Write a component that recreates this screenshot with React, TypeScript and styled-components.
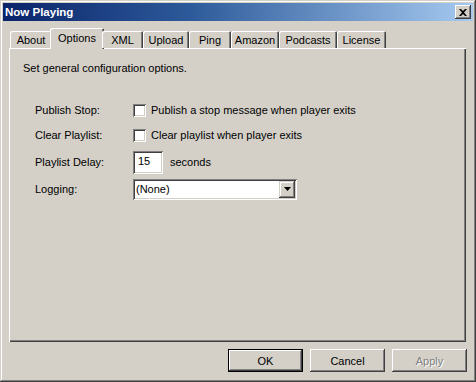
import React from "react";
import styled, { createGlobalStyle } from "styled-components";

const Global = createGlobalStyle`
  html, body { margin: 0; padding: 0; background: #d4d0c8; }
  body { font-family: "Liberation Sans", Arial, sans-serif; font-size: 11px; color: #000; }
  * { box-sizing: border-box; }
`;

const Window = styled.div`
  width: 476px;
  height: 382px;
  background: #d4d0c8;
  padding: 3px;
  display: flex;
  flex-direction: column;
  box-shadow: inset -1px -1px #404040, inset 1px 1px #d4d0c8,
    inset -2px -2px #808080, inset 2px 2px #ffffff;
`;

const TitleBar = styled.div`
  height: 18px;
  display: flex;
  align-items: center;
  justify-content: space-between;
  padding: 0 2px 0 2px;
  background: linear-gradient(to right, #0a246a 0%, #2d5a9a 40%, #a6caf0 100%);
`;

const Title = styled.span`
  color: #fff;
  font-weight: bold;
  font-size: 11.5px;
`;

const CloseButton = styled.div`
  width: 16px;
  height: 14px;
  background: #d4d0c8;
  display: flex;
  align-items: center;
  justify-content: center;
  box-shadow: inset -1px -1px #404040, inset 1px 1px #ffffff,
    inset -2px -2px #808080, inset 2px 2px #d4d0c8;
`;

const Body = styled.div`
  flex: 1;
  display: flex;
  flex-direction: column;
  padding: 7px 7px 0 6px;
`;

const TabStrip = styled.div`
  display: flex;
  align-items: flex-end;
  height: 20px;
  padding-left: 1px;
  position: relative;
  z-index: 1;
`;

const Tab = styled.div<{ $w: number; $active?: boolean }>`
  width: ${(p) => (p.$active ? p.$w + 4 : p.$w)}px;
  margin: ${(p) => (p.$active ? "0 -2px -1px -2px" : "0")};
  height: ${(p) => (p.$active ? 21 : 17)}px;
  background: #d4d0c8;
  display: flex;
  align-items: center;
  justify-content: center;
  padding-bottom: ${(p) => (p.$active ? 2 : 0)}px;
  border-radius: 2px 2px 0 0;
  box-shadow: inset 1px 1px #ffffff, inset -1px 0 #404040, inset -2px 0 #808080;
  font-size: 11px;
`;

const Panel = styled.div`
  height: 294px;
  padding: 14px 14px;
  box-shadow: inset 1px 1px #ffffff, inset -1px -1px #404040,
    inset -2px -2px #808080;
`;

const Description = styled.div`
  font-size: 11px;
  line-height: 13px;
`;

const Form = styled.div`
  margin-top: 23px;
  margin-left: 12px;
  display: grid;
  grid-template-columns: 98px auto;
  align-items: center;
`;

const Label = styled.div<{ $h: number }>`
  height: ${(p) => p.$h}px;
  display: flex;
  align-items: center;
  font-size: 11px;
`;

const Field = styled.div<{ $h: number }>`
  height: ${(p) => p.$h}px;
  display: flex;
  align-items: center;
  gap: 5px;
  font-size: 11px;
`;

const Check = styled.div`
  width: 13px;
  height: 13px;
  background: #fff;
  box-shadow: inset 1px 1px #808080, inset -1px -1px #ffffff,
    inset 2px 2px #404040, inset -2px -2px #d4d0c8;
`;

const Sunken = styled.div<{ $w: number; $h: number }>`
  width: ${(p) => p.$w}px;
  height: ${(p) => p.$h}px;
  background: #fff;
  display: flex;
  align-items: center;
  padding: 2px;
  box-shadow: inset 1px 1px #808080, inset -1px -1px #ffffff,
    inset 2px 2px #404040, inset -2px -2px #d4d0c8;
  font-size: 11px;
`;

const InputText = styled.span`
  padding-left: 3px;
  padding-bottom: 3px;
`;

const ComboText = styled.span`
  flex: 1;
  padding-left: 1px;
`;

const DropButton = styled.div`
  width: 16px;
  height: 17px;
  background: #d4d0c8;
  display: flex;
  align-items: center;
  justify-content: center;
  box-shadow: inset -1px -1px #404040, inset 1px 1px #d4d0c8,
    inset -2px -2px #808080, inset 2px 2px #ffffff;
`;

const ButtonRow = styled.div`
  display: flex;
  justify-content: flex-end;
  gap: 7px;
  margin-top: 7px;
  margin-right: -1px;
`;

const Button = styled.div<{ $default?: boolean; $disabled?: boolean }>`
  width: 75px;
  height: 23px;
  display: flex;
  align-items: center;
  justify-content: center;
  font-size: 11px;
  color: ${(p) => (p.$disabled ? "#808080" : "#000")};
  text-shadow: ${(p) => (p.$disabled ? "1px 1px 0 #ffffff" : "none")};
  background: #d4d0c8;
  box-shadow: ${(p) =>
    p.$default
      ? "inset 0 0 0 1px #000, inset -2px -2px #404040, inset 2px 2px #ffffff, inset -3px -3px #808080"
      : "inset -1px -1px #404040, inset 1px 1px #ffffff, inset -2px -2px #808080, inset 2px 2px #d4d0c8"};
`;

const tabs: [string, number][] = [
  ["About", 42],
  ["Options", 50],
  ["XML", 41],
  ["Upload", 46],
  ["Ping", 42],
  ["Amazon", 48],
  ["Podcasts", 58],
  ["License", 49],
];

export default function App() {
  return (
    <>
      <Global />
      <Window>
        <TitleBar>
          <Title>Now Playing</Title>
          <CloseButton>
            <svg width="8" height="7" viewBox="0 0 8 7">
              <path d="M0 0h2l2 2 2-2h2L5 3.5 8 7H6L4 5 2 7H0l3-3.5z" fill="#000" />
            </svg>
          </CloseButton>
        </TitleBar>
        <Body>
          <TabStrip>
            {tabs.map(([t, w]) => (
              <Tab key={t} $w={w} $active={t === "Options"}>
                {t}
              </Tab>
            ))}
          </TabStrip>
          <Panel>
            <Description>Set general configuration options.</Description>
            <Form>
              <Label $h={24}>Publish Stop:</Label>
              <Field $h={24}>
                <Check />
                <span>Publish a stop message when player exits</span>
              </Field>
              <Label $h={26}>Clear Playlist:</Label>
              <Field $h={26}>
                <Check />
                <span>Clear playlist when player exits</span>
              </Field>
              <Label $h={28}>Playlist Delay:</Label>
              <Field $h={28}>
                <Sunken $w={30} $h={23}>
                  <InputText>15</InputText>
                </Sunken>
                <span style={{ marginLeft: 2 }}>seconds</span>
              </Field>
              <Label $h={26}>Logging:</Label>
              <Field $h={26}>
                <Sunken $w={164} $h={21}>
                  <ComboText>(None)</ComboText>
                  <DropButton>
                    <svg width="7" height="4" viewBox="0 0 7 4">
                      <path d="M0 0h7L3.5 4z" fill="#000" />
                    </svg>
                  </DropButton>
                </Sunken>
              </Field>
            </Form>
          </Panel>
          <ButtonRow>
            <Button $default>OK</Button>
            <Button>Cancel</Button>
            <Button $disabled>Apply</Button>
          </ButtonRow>
        </Body>
      </Window>
    </>
  );
}
